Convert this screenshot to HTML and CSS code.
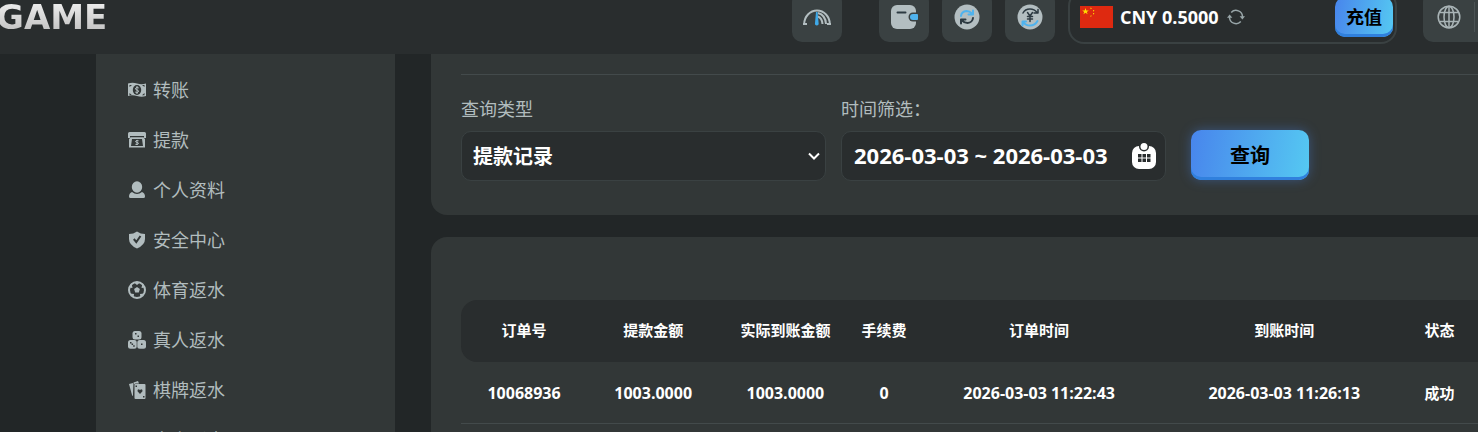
FILE: index.html
```html
<!DOCTYPE html>
<html lang="zh-CN">
<head>
    <meta charset="UTF-8">
    <meta name="viewport" content="width=device-width, initial-scale=1.0">
    <title>提款记录</title>
    <link rel="stylesheet" href="styles.css">
</head>
<body>
    <header class="topbar">
        <a href="#" class="logo">GAME</a>
        <div class="tools">
            <button class="tool speed" aria-label="线路测速">
                <svg width="28" height="18" viewBox="0 0 28 18" fill="none" stroke="#b3bec1" stroke-width="2">
                    <path d="M0 16h4M1.200 16A12.800 13.500 0 0 1 26.800 16M24 16h4"/>
                    <path d="M15 5Q22.500 7 23 16M15 8.500Q19 10 19.500 16"/>
                    <path d="M13 4h1.600l1 11a1.900 1.900 0 1 1-3.600 0z" fill="#3fa9e8" stroke="none"/>
                </svg>
            </button>
            <button class="tool" aria-label="钱包">
                <svg width="28" height="26" viewBox="0 0 28 26">
                    <rect x="1" y="1" width="25" height="24" rx="6" fill="#b3bec1"/>
                    <path d="M7.500 8.500h8" stroke="#2d3a42" stroke-width="2" stroke-linecap="round"/>
                    <path d="M28 8.500h-5a4.500 4.500 0 0 0 0 9h5z" fill="#3a4142"/>
                    <path d="M27 10h-4a3 3 0 0 0 0 6h4a1 1 0 0 0 1-1v-4a1 1 0 0 0-1-1z" fill="#4fb3ee"/>
                </svg>
            </button>
            <button class="tool" aria-label="转换">
                <svg width="26" height="26" viewBox="0 0 26 26" fill="none" stroke-width="2" stroke-linecap="round" stroke-linejoin="round">
                    <circle cx="13" cy="13" r="12.500" fill="#b3bec1"/>
                    <path d="M7 12Q7.500 7.500 12.500 7Q15.500 7 18 9.500M19 6.500V10.500H14.500" stroke="#4fb3ee"/>
                    <path d="M19 14Q18.500 18.500 13.500 19Q10.500 19 8 16.500M7 19.500V15.500H11.500" stroke="#2d3a42"/>
                </svg>
            </button>
            <button class="tool" aria-label="返水">
                <svg width="26" height="26" viewBox="0 0 26 26" fill="none" stroke-linecap="round" stroke-linejoin="round">
                    <circle cx="13" cy="13" r="12.500" fill="#b3bec1"/>
                    <path d="M6 9Q8 5 13 5Q17.500 5 20 8.500M21 5.500V9H17" stroke="#2d3a42" stroke-width="1.500"/>
                    <path d="M20.500 17Q18 21.500 13 21.500Q8.500 21.500 6 18M5.500 21.500V17.500H9" stroke="#4fb3ee" stroke-width="2"/>
                    <path d="M10.500 8.500L13 12L15.500 8.500M13 12V17.500M10.500 12.500h5M10.500 15h5" stroke="#2d3a42" stroke-width="1.500"/>
                </svg>
            </button>
            <div class="balance">
                <svg class="flag" width="33" height="22" viewBox="0 0 33 22">
                    <path d="M0 0h33v22H0z" fill="#de2910"/>
                    <path d="M5.500 2l.8 2.400h2.500l-2 1.500.8 2.400-2.100-1.500-2.100 1.500.8-2.400-2-1.500h2.500z" fill="#ffde00"/>
                    <path d="M10.500 1.500l1.500.8-1.500 1zM13 4l1.500.5-1.500 1.200zM13 7l1.500.3-1.500 1.400zM10.500 9.500l1.500.3-1.500 1.200z" fill="#ffde00"/>
                </svg>
                <span class="amount">CNY 0.5000</span>
                <button class="refresh" aria-label="刷新余额">
                    <svg width="18" height="16" viewBox="0 0 18 16" fill="none" stroke="#98a5a8" stroke-width="1.500">
                        <path d="M4.200 3.500A6.500 6.500 0 0 1 15.500 8M13.800 12.500A6.500 6.500 0 0 1 2.500 8"/>
                        <path d="M12.600 7.200h5.400l-2.600 3.300zM0 8.800h5.400L2.600 5.500z" fill="#98a5a8" stroke="none"/>
                    </svg>
                </button>
                <button class="btn recharge">充值</button>
            </div>
            <button class="tool language" aria-label="语言">
                <svg width="24" height="24" viewBox="0 0 24 24" fill="none" stroke="#a9b4b6" stroke-width="1.500">
                    <circle cx="12" cy="12" r="10.800"/>
                    <ellipse cx="12" cy="12" rx="5" ry="10.800"/>
                    <path d="M12 1.200v21.600M2.500 7.500h19M2.500 16.500h19"/>
                </svg>
                <span class="divider"></span>
            </button>
        </div>
    </header>

    <div class="layout">
        <nav class="sidebar">
            <a href="#">
                <svg width="18" height="18" viewBox="0 0 18 18">
                    <path d="M0 2.500q4.500-1.500 9 0t9 0v12.500q-4.500 1.500-9 0t-9 0z" fill="#b1bcbe"/>
                    <ellipse cx="9" cy="9" rx="4.200" ry="5" fill="#323737"/>
                    <path d="M1.500 6V4h2.500zM16.500 12v2.200H14zM1.500 12v2.200H4zM16.500 6V4H14z" fill="#323737"/>
                    <path d="M10.800 7Q9 5.600 7.800 7t1.200 2 1.200 2T7.200 11M9 5v8" fill="none" stroke="#b1bcbe"/>
                </svg>
                转账
            </a>
            <a href="#">
                <svg width="18" height="18" viewBox="0 0 18 18">
                    <path d="M1.500 1h15A1.500 1.500 0 0 1 18 2.500V7h-2V5H2v2H0V2.500A1.500 1.500 0 0 1 1.500 1z" fill="#b1bcbe"/>
                    <path d="M2.500 6.200h13l1.500 2v8.300H1V8.200zM4 8L3 15h12l-1-7z" fill="#b1bcbe" fill-rule="evenodd"/>
                    <path d="M10.600 9.800Q9 8.800 7.900 9.900t1.100 1.500 1.200 1.500T7.400 13.300M9 9v5" fill="none" stroke="#b1bcbe"/>
                </svg>
                提款
            </a>
            <a href="#">
                <svg width="18" height="18" viewBox="0 0 18 18" fill="#b1bcbe">
                    <ellipse cx="9" cy="6" rx="5.200" ry="5.800"/>
                    <path d="M4 11Q9 15 14 11Q17 12 17 15.500Q17 17 15.500 17H2.500Q1 17 1 15.500Q1 12 4 11z"/>
                </svg>
                个人资料
            </a>
            <a href="#">
                <svg width="18" height="18" viewBox="0 0 18 18">
                    <path d="M9 0.500Q12.500 3 17 3V8Q17 14 9 17.500Q1 14 1 8V3Q5.500 3 9 0.500z" fill="#b1bcbe"/>
                    <path d="M5.800 8l2.500 3L12.500 5" fill="none" stroke="#323737" stroke-width="2"/>
                </svg>
                安全中心
            </a>
            <a href="#">
                <svg width="18" height="18" viewBox="0 0 18 18">
                    <circle cx="9" cy="9" r="8" fill="none" stroke="#b1bcbe" stroke-width="2"/>
                    <path d="M9 6l2.900 2.100-1.100 3.400H7.200L6.100 8.100zM5.500 1h7L9 4zM1 6.500l3.500.5L3.500 2zM17 6.500l-3.500.5 1-5zM2 12.500l4 .5-.5 4zM16 12.500l-4 .5.500 4z" fill="#b1bcbe"/>
                </svg>
                体育返水
            </a>
            <a href="#">
                <svg width="18" height="18" viewBox="0 0 18 18" fill="#b1bcbe">
                    <rect x="4.500" y="0" width="9" height="8.500" rx="2.500"/>
                    <rect x="0" y="9" width="8.700" height="8.700" rx="2.500"/>
                    <rect x="9.300" y="9" width="8.700" height="8.700" rx="2.500"/>
                    <path d="M7 2h1.500v1.500H7zM9.500 4.500H11V6H9.500zM2 11h1.500v1.500H2zM3.600 12.600h1.500v1.500H3.600zM5.200 14.200h1.500v1.500H5.200zM13 12.500h1.500V14H13z" fill="#323737"/>
                </svg>
                真人返水
            </a>
            <a href="#">
                <svg width="18" height="18" viewBox="0 0 18 18">
                    <path d="M1 3L5 2V15Q4.500 15 4 14z" fill="#b1bcbe"/>
                    <path d="M5.500 1.500L10 0l1 2.500H7.500Q6 2.500 6 4v9z" fill="#b1bcbe"/>
                    <rect x="6.500" y="3" width="11" height="15" rx="1" fill="#b1bcbe"/>
                    <path d="M12 13l-2.500-2.700q-.3-2 1.300-2l1.200.8 1.200-.8q1.600 0 1.300 2zM7.500 4.500H9V6H7.500zM15 15h1.500v1.500H15z" fill="#323737"/>
                </svg>
                棋牌返水
            </a>
            <a href="#">
                <svg width="18" height="18" viewBox="0 0 18 18" fill="#b1bcbe">
                    <path d="M4 4h10q4 3 4 10-3 2-5-3H5q-2 5-5 3Q0 7 4 4z"/>
                </svg>
                电竞返水
            </a>
        </nav>

        <main class="content">
            <section class="panel filters">
                <form class="filter-form">
                    <div class="field type">
                        <label for="queryType">查询类型</label>
                        <div class="control select-box">
                            <select id="queryType">
                                <option>提款记录</option>
                            </select>
                            <svg class="chevron" width="12" height="8" viewBox="0 0 12 8" fill="none" stroke="#fff" stroke-width="2">
                                <path d="M1 1.500l5 5 5-5"/>
                            </svg>
                        </div>
                    </div>
                    <div class="field range">
                        <label for="dateRange">时间筛选：</label>
                        <div class="control">
                            <input id="dateRange" type="text" value="2026-03-03 ~ 2026-03-03" readonly>
                            <svg width="24" height="26" viewBox="0 0 24 26" fill="#fff">
                                <rect x="0" y="3" width="24" height="23" rx="7"/>
                                <circle cx="12" cy="3.500" r="5" fill="#292d2e"/>
                                <circle cx="12" cy="3.500" r="3.500"/>
                                <path d="M6 11h3.500v3.500H6zM10.500 11h3.500v3.500h-3.500zM15 11h3.500v3.500h-3.500zM6 15.500h3.500V19H6zM10.500 15.500h3.500V19h-3.500zM15 15.500h3.500V19h-3.500z" fill="#292d2e"/>
                            </svg>
                        </div>
                    </div>
                    <button type="button" class="btn search">查询</button>
                </form>
            </section>

            <section class="panel records">
                <table>
                    <colgroup>
                        <col class="col-order">
                        <col class="col-amount">
                        <col class="col-amount">
                        <col class="col-fee">
                        <col class="col-time">
                        <col class="col-time">
                        <col class="col-status">
                    </colgroup>
                    <thead>
                        <tr>
                            <th>订单号</th>
                            <th>提款金额</th>
                            <th>实际到账金额</th>
                            <th>手续费</th>
                            <th>订单时间</th>
                            <th>到账时间</th>
                            <th class="status">状态</th>
                        </tr>
                    </thead>
                    <tbody>
                        <tr>
                            <td>10068936</td>
                            <td>1003.0000</td>
                            <td>1003.0000</td>
                            <td>0</td>
                            <td>2026-03-03 11:22:43</td>
                            <td>2026-03-03 11:26:13</td>
                            <td class="status">成功</td>
                        </tr>
                    </tbody>
                </table>
            </section>
        </main>
    </div>
</body>
</html>
```
FILE: styles.css
```css
* {
    box-sizing: border-box;
}
body {
    margin: 0;
    height: 100vh;
    overflow: hidden;
    background: #222627;
    color: #fff;
    font-family: "Open Sans", "Noto Sans CJK SC", sans-serif;
}
button, input, select {
    font-family: inherit;
    color: inherit;
    border: 0;
    background: none;
    padding: 0;
}
svg {
    display: block;
    flex: none;
}
a {
    color: inherit;
    text-decoration: none;
}

/* top bar: the tools are taller than the visible strip */
.topbar {
    display: flex;
    align-items: center;
    justify-content: space-between;
    height: 54px;
    padding-bottom: 20px;
    background: #292d2e;
}
.logo {
    margin-left: -4px;
    font-family: "DejaVu Sans", sans-serif;
    font-weight: bold;
    font-size: 34px;
    line-height: 36px;
    background: linear-gradient(#f2f2f2, #bdbdbd);
    -webkit-background-clip: text;
    background-clip: text;
    color: transparent;
}
.tools {
    display: flex;
    align-items: center;
    gap: 13px;
}
.tool {
    display: flex;
    align-items: center;
    justify-content: center;
    width: 50px;
    height: 50px;
    border-radius: 10px;
    background: #3a4142;
}
.speed {
    margin-right: 24px;
}
.language {
    justify-content: flex-end;
    gap: 13px;
    width: 55px;
    margin-left: 13px;
    padding-right: 3px;
    border-radius: 10px 0 0 10px;
}
.divider {
    width: 1px;
    height: 30px;
    background: #4b5354;
}
.balance {
    display: flex;
    align-items: center;
    width: 329px;
    height: 54px;
    padding: 0 2px 0 10px;
    border: 2px solid #3a4142;
    border-radius: 16px;
}
.amount {
    margin: 0 8px 0 7px;
    font-size: 18px;
    line-height: 24px;
    font-weight: bold;
}
.btn {
    padding-bottom: 2px;
    background: linear-gradient(100deg, #4885ec, #55c9f2);
    box-shadow: inset 0 -3px #3080dd;
    border-radius: 10px;
    color: #000;
    font-weight: bold;
}
.recharge {
    width: 58px;
    height: 40px;
    margin-left: auto;
    font-size: 18px;
}

.layout {
    display: flex;
    align-items: flex-start;
    padding-left: 96px;
}
.sidebar {
    flex: none;
    width: 299px;
    padding: 11px 32px;
    background: #323737;
    color: #b1bcbe;
}
.sidebar a {
    display: flex;
    align-items: center;
    gap: 7px;
    height: 50px;
    padding-bottom: 2px;
    font-size: 18px;
}
.sidebar svg {
    margin-top: 2px;
}
.content {
    flex: 1;
    min-width: 0;
    padding-left: 36px;
}
.panel {
    padding-left: 30px;
    background: #323737;
}
.filters {
    padding-top: 20px;
    border-radius: 0 0 0 16px;
}
.filter-form {
    display: flex;
    align-items: flex-end;
    padding: 22px 0 34px;
    border-top: 1px solid #434a4b;
}
.field {
    display: flex;
    flex-direction: column;
    gap: 10px;
    margin-right: 15px;
}
.field label {
    font-size: 18px;
    line-height: 24px;
    color: #b1bcbe;
}
.type {
    width: 365px;
}
.range {
    width: 325px;
    margin-right: 25px;
}
.control {
    display: flex;
    align-items: center;
    height: 50px;
    padding: 0 9px 0 12px;
    border: 1px solid #3a4142;
    border-radius: 10px;
    background: #292d2e;
}
.control input {
    flex: 1;
    min-width: 0;
    padding-bottom: 2px;
    font-size: 22px;
    font-weight: bold;
}
.select-box {
    display: grid;
    padding: 0;
}
.select-box select {
    grid-area: 1 / 1;
    height: 48px;
    padding-left: 11px;
    appearance: none;
    font-size: 20px;
    font-weight: bold;
}
.chevron {
    grid-area: 1 / 1;
    justify-self: end;
    margin-right: 5px;
    pointer-events: none;
}
.search {
    width: 118px;
    height: 50px;
    margin-bottom: 1px;
    font-size: 20px;
    box-shadow: inset 0 -3px #3080dd, 0 0 12px rgba(72, 133, 236, 0.4);
}

.records {
    margin-top: 22px;
    padding-top: 63px;
    height: 300px;
    border-radius: 16px 0 0 0;
}
table {
    width: 100%;
    table-layout: fixed;
    border-collapse: separate;
    border-spacing: 0;
    text-align: center;
}
.col-order { width: 12.4%; }
.col-amount { width: 13%; }
.col-fee { width: 6.4%; }
.col-time { width: 24.1%; }
.col-status { width: 7%; }
th, td {
    height: 62px;
    padding: 0;
    font-weight: bold;
    white-space: nowrap;
}
th {
    padding-bottom: 4px;
    font-size: 15px;
    background: #292d2e;
}
th:first-child {
    border-radius: 16px 0 0 16px;
}
td {
    font-size: 16px;
    border-bottom: 1px solid #434a4b;
}
.status {
    padding-right: 6px;
    font-size: 15px;
}
```
